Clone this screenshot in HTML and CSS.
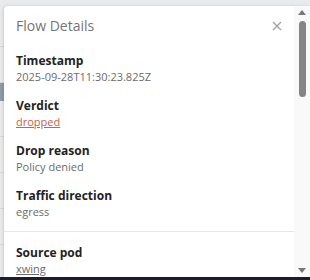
FILE: index.html
```html
<!DOCTYPE html>
<html>
<head>
    <link rel="stylesheet" href="styles.css">
</head>
<body>
    <div class="screen">
        <!-- table rows behind the drawer -->
        <div class="backdrop">
            <div class="row"></div>
            <div class="row"></div>
            <div class="row selected"></div>
            <div class="row"></div>
            <div class="row"></div>
            <div class="row"></div>
            <div class="row"></div>
        </div>

        <!-- Details drawer -->
        <div class="drawer">
            <div class="drawer-body">
                <div class="drawer-header">
                    <h3 class="drawer-title">Flow Details</h3>
                    <button class="close-btn" type="button" aria-label="Close">
                        <svg width="10" height="10" viewBox="0 0 10 10">
                            <path d="M1 1L9 9M9 1L1 9" stroke="#a3a3a3" stroke-width="1.4" fill="none"/>
                        </svg>
                    </button>
                </div>

                <div class="field">
                    <div class="field-label">Timestamp</div>
                    <div class="field-value">2025-09-28T11:30:23.825Z</div>
                </div>
                <div class="field">
                    <div class="field-label">Verdict</div>
                    <a class="field-value link danger">dropped</a>
                </div>
                <div class="field">
                    <div class="field-label">Drop reason</div>
                    <div class="field-value">Policy denied</div>
                </div>
                <div class="field">
                    <div class="field-label">Traffic direction</div>
                    <div class="field-value">egress</div>
                </div>

                <hr class="divider">

                <div class="field">
                    <div class="field-label">Source pod</div>
                    <a class="field-value link">xwing</a>
                </div>
            </div>

            <div class="scrollbar">
                <div class="arrow up"></div>
                <div class="track">
                    <div class="thumb"></div>
                </div>
                <div class="arrow down"></div>
            </div>
        </div>

        <div class="taskbar"></div>
    </div>
</body>
</html>
```

FILE: styles.css
```css
html, body {
    margin: 0;
    padding: 0;
}

body {
    font-family: "Open Sans", "Noto Sans", sans-serif;
    background-color: #e8eaec;
}

.screen {
    position: relative;
    width: 310px;
    height: 280px;
    overflow: hidden;
}

.backdrop {
    padding-top: 11px;
}

.backdrop .row {
    height: 36px;
    border-bottom: 1px solid #d6d9dc;
    box-sizing: border-box;
}

.backdrop .row.selected {
    height: 18px;
    background-color: #8e9ba7;
    border-bottom: none;
}

.drawer {
    position: absolute;
    left: 4px;
    top: 6px;
    right: 0;
    bottom: 3px;
    display: flex;
    background-color: #fff;
    border-top-left-radius: 4px;
    box-shadow: -1px 0 3px rgba(0, 0, 0, 0.12);
}

.drawer-body {
    flex: 1;
    padding: 10px 0 0 12px;
    overflow: hidden;
}

.drawer-header {
    display: flex;
    align-items: center;
    justify-content: space-between;
    height: 20px;
    margin-bottom: 17px;
}

.drawer-title {
    margin: 0;
    font-size: 14px;
    font-weight: normal;
    color: #757575;
    line-height: 20px;
}

.close-btn {
    background: none;
    border: none;
    padding: 0;
    margin-right: 12px;
    width: 10px;
    height: 10px;
    display: flex;
    cursor: pointer;
}

.field {
    margin-bottom: 13px;
}

.field-label {
    font-size: 12px;
    font-weight: bold;
    color: #222;
    line-height: 16px;
}

.field-value {
    display: block;
    font-size: 11px;
    color: #6b6b6b;
    line-height: 16px;
}

.field-value.link {
    text-decoration: underline;
    cursor: pointer;
}

.field-value.danger {
    color: #c8614c;
}

.divider {
    border: none;
    border-top: 1px solid #e6e6e6;
    margin: -2px 0 13px -12px;
}

.scrollbar {
    width: 16px;
    background-color: #f9f9f9;
    display: flex;
    flex-direction: column;
    align-items: center;
    padding: 4px 0 4px;
}

.track {
    flex: 1;
    padding-top: 6px;
}

.thumb {
    width: 7px;
    height: 76px;
    border-radius: 4px;
    background-color: #858585;
}

.arrow {
    width: 0;
    height: 0;
    border-left: 4px solid transparent;
    border-right: 4px solid transparent;
}

.arrow.up {
    border-bottom: 5px solid #777;
}

.arrow.down {
    border-top: 5px solid #777;
}

.taskbar {
    position: absolute;
    left: 0;
    right: 0;
    bottom: 0;
    height: 3px;
    background-color: #1c1c2c;
}
```
